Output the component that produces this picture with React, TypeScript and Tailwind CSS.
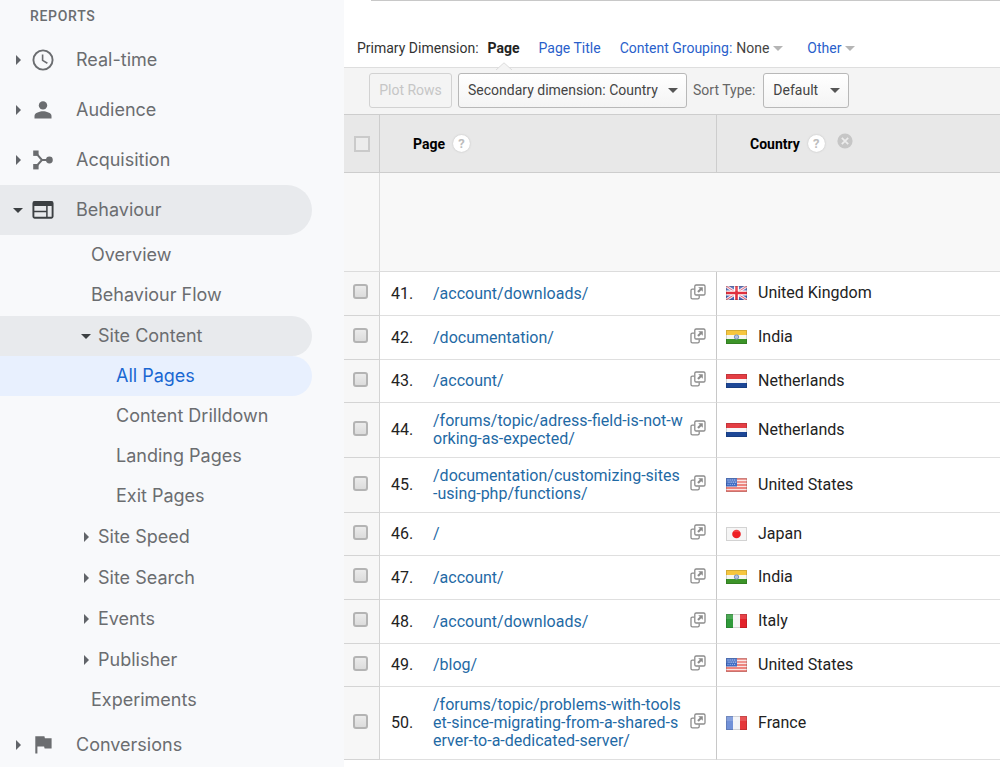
import type { ReactNode } from "react";

type FlagCode = "gb" | "in" | "nl" | "us" | "jp" | "it" | "fr";

interface Row {
  n: number;
  path: string;
  flag: FlagCode;
  country: string;
}

const rows: Row[] = [
  { n: 41, path: "/account/downloads/", flag: "gb", country: "United Kingdom" },
  { n: 42, path: "/documentation/", flag: "in", country: "India" },
  { n: 43, path: "/account/", flag: "nl", country: "Netherlands" },
  { n: 44, path: "/forums/topic/adress-field-is-not-working-as-expected/", flag: "nl", country: "Netherlands" },
  { n: 45, path: "/documentation/customizing-sites-using-php/functions/", flag: "us", country: "United States" },
  { n: 46, path: "/", flag: "jp", country: "Japan" },
  { n: 47, path: "/account/", flag: "in", country: "India" },
  { n: 48, path: "/account/downloads/", flag: "it", country: "Italy" },
  { n: 49, path: "/blog/", flag: "us", country: "United States" },
  {
    n: 50,
    path: "/forums/topic/problems-with-toolset-since-migrating-from-a-shared-server-to-a-dedicated-server/",
    flag: "fr",
    country: "France",
  },
];

function FlagArt({ code }: { code: FlagCode }) {
  switch (code) {
    case "gb":
      return (
        <>
          <rect width="21" height="14" fill="#4a64b4" />
          <path d="M0 0L21 14M21 0L0 14" stroke="#f3e9f0" strokeWidth="3" />
          <path d="M0 0L21 14M21 0L0 14" stroke="#e0526a" strokeWidth="1" />
          <path d="M10.5 0V14M0 7H21" stroke="#fff" strokeWidth="5" />
          <path d="M10.5 0V14M0 7H21" stroke="#e0303f" strokeWidth="2.6" />
        </>
      );
    case "in":
      return (
        <>
          <rect width="21" height="5" fill="#f5bd1f" />
          <rect y="5" width="21" height="4" fill="#f6f6f0" />
          <rect y="9" width="21" height="5" fill="#3c9428" />
          <circle cx="10.5" cy="7" r="2.2" fill="#b4c3dc" stroke="#6d8bbd" strokeWidth="0.9" />
        </>
      );
    case "nl":
      return (
        <>
          <rect width="21" height="5" fill="#e01f26" />
          <rect y="5" width="21" height="4" fill="#f7f7f9" />
          <rect y="9" width="21" height="5" fill="#1d4796" />
        </>
      );
    case "us":
      return (
        <>
          <rect width="21" height="14" fill="#f9e4e2" />
          <path d="M0 1H21M0 4H21M0 7H21M0 10H21M0 13H21" stroke="#e8655f" strokeWidth="1.4" />
          <rect width="11" height="8.5" fill="#3f6bc4" />
          <path d="M1.5 2H10M2.5 4.2H10M1.5 6.4H10" stroke="#b9cdf0" strokeWidth="0.9" strokeDasharray="1 1.2" />
        </>
      );
    case "jp":
      return (
        <>
          <rect width="21" height="14" fill="#f5f5f5" />
          <circle cx="10.5" cy="7" r="4.3" fill="#ee1f24" />
        </>
      );
    case "it":
      return (
        <>
          <rect width="7" height="14" fill="#2f9a3a" />
          <rect x="7" width="7" height="14" fill="#f5f5f5" />
          <rect x="14" width="7" height="14" fill="#e3222a" />
        </>
      );
    case "fr":
      return (
        <>
          <rect width="7" height="14" fill="#7191d8" />
          <rect x="7" width="7" height="14" fill="#f3f4f7" />
          <rect x="14" width="7" height="14" fill="#e5383a" />
        </>
      );
  }
}

function Flag({ code }: { code: FlagCode }) {
  return (
    <svg width="21" height="14" viewBox="0 0 21 14" className="shrink-0" aria-hidden="true">
      <FlagArt code={code} />
      <rect width="21" height="5" fill="#fff" opacity="0.14" />
      <rect x="0.5" y="0.5" width="20" height="13" fill="none" stroke="#000" strokeOpacity="0.14" />
    </svg>
  );
}

function CaretRight() {
  return (
    <svg width="5" height="10" viewBox="0 0 5 10" fill="#616469" className="shrink-0" aria-hidden="true">
      <path d="M0 0L5 5L0 10Z" />
    </svg>
  );
}

function CaretDown({ className }: { className: string }) {
  return (
    <svg width="10" height="5" viewBox="0 0 10 5" fill="currentColor" className={className} aria-hidden="true">
      <path d="M0 0H10L5 5Z" />
    </svg>
  );
}

const clockIcon = (
  <svg width="22" height="22" viewBox="0 0 22 22" fill="none" stroke="#6b6d70" strokeWidth="1.9" aria-hidden="true">
    <circle cx="11" cy="11" r="9.6" />
    <path d="M10.6 5.5V11.4L15.4 14.2" strokeWidth="1.6" />
  </svg>
);
const personIcon = (
  <svg width="22" height="22" viewBox="0 0 22 22" fill="#6b6d70" aria-hidden="true">
    <circle cx="11" cy="6.4" r="4.2" />
    <path d="M2.5 19.5V17C2.5 13.8 8 12.3 11 12.3S19.5 13.8 19.5 17V19.5Z" />
  </svg>
);
const acquisitionIcon = (
  <svg width="22" height="22" viewBox="0 0 22 22" fill="#6b6d70" aria-hidden="true">
    <rect x="1.2" y="1.5" width="5.4" height="5.4" />
    <rect x="1.2" y="15" width="5.4" height="5.4" />
    <circle cx="17.4" cy="11" r="3.4" />
    <path d="M4 4.2L10 11L4 17.7M10 11H17" fill="none" stroke="#6b6d70" strokeWidth="2" />
  </svg>
);
const behaviourIcon = (
  <svg width="22" height="22" viewBox="0 0 22 22" fill="none" stroke="#3c4043" aria-hidden="true">
    <rect x="1.4" y="3" width="19.2" height="15.8" rx="1.2" strokeWidth="1.9" />
    <path d="M1 4.9H21" strokeWidth="4.2" />
    <path d="M2 12.6H14.6M14.9 7V18.5" strokeWidth="1.5" />
  </svg>
);
const flagIcon = (
  <svg width="22" height="22" viewBox="0 0 22 22" fill="#6b6d70" aria-hidden="true">
    <path d="M3.3 2.3H12.4L12.9 4.3H19.6V14.4H12.6L12.1 12.4H5.4V19.6H3.3Z" />
  </svg>
);

function TopItem({ icon, label, open }: { icon: ReactNode; label: string; open?: boolean }) {
  return (
    <a
      href="#"
      className={
        open
          ? "mr-8 flex h-[50px] items-center rounded-r-full bg-[#e8eaed]"
          : "mr-8 flex h-[50px] items-center rounded-r-full"
      }
    >
      <span className="flex w-8 shrink-0 items-center justify-center pl-1">
        {open ? <CaretDown className="text-[#3c4043]" /> : <CaretRight />}
      </span>
      <span className="w-11 shrink-0">{icon}</span>
      {label}
    </a>
  );
}

function GroupItem({ label, open }: { label: string; open?: boolean }) {
  return (
    <a
      href="#"
      className={
        open
          ? "mr-8 flex h-10 items-center rounded-r-full bg-[#e8eaed] pl-20"
          : "mr-8 flex h-10 items-center rounded-r-full pl-20"
      }
    >
      <span className="flex w-[18px] shrink-0 items-center pl-px">
        {open ? <CaretDown className="text-[#3c4043]" /> : <span className="pl-[3px]"><CaretRight /></span>}
      </span>
      {label}
    </a>
  );
}

function Leaf({ label, deep, active }: { label: string; deep?: boolean; active?: boolean }) {
  const base = "mr-8 flex h-10 items-center rounded-r-full";
  const pad = deep ? "pl-[116px]" : "pl-[91px]";
  const tone = active ? "bg-[#e8f0fe] text-[#1967d2]" : "";
  return (
    <a href="#" aria-current={active ? "page" : undefined} className={`${base} ${pad} ${tone}`}>
      {label}
    </a>
  );
}

function Sidebar() {
  return (
    <nav
      aria-label="Reports"
      className="w-[344px] shrink-0 bg-[#f8f9fb] font-['Inter',sans-serif] text-[18px] leading-6 text-[#6b6d70]"
    >
      <h2 className="flex h-[35px] items-start pt-[7px] pl-[30px] font-['Roboto',sans-serif] text-sm leading-[18px] font-medium tracking-wider">
        REPORTS
      </h2>
      <ul>
        <li><TopItem icon={clockIcon} label="Real-time" /></li>
        <li><TopItem icon={personIcon} label="Audience" /></li>
        <li><TopItem icon={acquisitionIcon} label="Acquisition" /></li>
        <li>
          <TopItem icon={behaviourIcon} label="Behaviour" open />
          <ul>
            <li><Leaf label="Overview" /></li>
            <li><Leaf label="Behaviour Flow" /></li>
            <li className="mt-px">
              <GroupItem label="Site Content" open />
              <ul>
                <li><Leaf label="All Pages" deep active /></li>
                <li><Leaf label="Content Drilldown" deep /></li>
                <li><Leaf label="Landing Pages" deep /></li>
                <li><Leaf label="Exit Pages" deep /></li>
              </ul>
            </li>
            <li className="mt-px"><GroupItem label="Site Speed" /></li>
            <li className="mt-px"><GroupItem label="Site Search" /></li>
            <li className="mt-px"><GroupItem label="Events" /></li>
            <li className="mt-px"><GroupItem label="Publisher" /></li>
            <li><Leaf label="Experiments" /></li>
          </ul>
        </li>
        <li><TopItem icon={flagIcon} label="Conversions" /></li>
      </ul>
    </nav>
  );
}

function DimensionBar() {
  return (
    <div className="flex h-[67px] flex-col">
      <div className="ml-[27px] h-px bg-[#c8c8c8]" />
      <div className="flex flex-1 items-end pb-2.5 pl-[13px] text-sm leading-[18px] whitespace-nowrap text-[#333]">
        <span>Primary Dimension:</span>
        <span className="relative ml-[9px] font-bold text-[#222]">
          Page
          <svg
            width="16"
            height="8"
            viewBox="0 0 16 8"
            className="absolute top-[23px] left-1/2 -translate-x-1/2"
            aria-hidden="true"
          >
            <path d="M0 8L8 0.8L16 8" fill="#f4f4f4" stroke="#dcdcdc" />
          </svg>
        </span>
        <a href="#" className="ml-[19px] text-[#2a5fcb]">Page Title</a>
        <label htmlFor="grouping" className="ml-[19px] text-[#2a5fcb]">Content Grouping:</label>
        <span className="relative ml-1 flex items-center">
          <select id="grouping" className="w-[47px] appearance-none bg-transparent text-[#444]">
            <option>None</option>
          </select>
          <CaretDown className="pointer-events-none absolute right-0 text-[#b5b5b5]" />
        </span>
        <button type="button" className="ml-6 flex items-center gap-1 text-[#2a5fcb]">
          Other
          <CaretDown className="text-[#b5b5b5]" />
        </button>
      </div>
    </div>
  );
}

function Toolbar() {
  return (
    <div className="flex h-[47px] items-center border-t border-[#dedede] bg-[#f4f4f4] pb-0.5 pl-[25px] text-sm whitespace-nowrap text-[#444]">
      <button
        type="button"
        disabled
        className="h-[35px] w-[83px] rounded-[3px] border border-[#d2d2d2] bg-[#f4f4f4] text-[#c6c6c6]"
      >
        Plot Rows
      </button>
      <span className="relative ml-1.5 flex items-center">
        <select
          aria-label="Secondary dimension"
          className="h-[35px] w-[229px] appearance-none rounded-[3px] border border-[#b8b8b8] bg-linear-to-b from-white to-[#f4f4f4] pl-[9px]"
        >
          <option>Secondary dimension: Country</option>
        </select>
        <CaretDown className="pointer-events-none absolute right-[9px] text-[#555]" />
      </span>
      <label htmlFor="sort" className="ml-1.5 text-[#666]">Sort Type:</label>
      <span className="relative ml-2 flex items-center">
        <select
          id="sort"
          className="h-[35px] w-[86px] appearance-none rounded-[3px] border border-[#b8b8b8] bg-linear-to-b from-white to-[#f4f4f4] pl-[9px]"
        >
          <option>Default</option>
        </select>
        <CaretDown className="pointer-events-none absolute right-[9px] text-[#555]" />
      </span>
    </div>
  );
}

function Help({ topic }: { topic: string }) {
  return (
    <button
      type="button"
      aria-label={`Help: ${topic}`}
      className="flex size-[17px] items-center justify-center rounded-full bg-white text-[13px] leading-none font-bold text-[#bdbdbd] shadow-[0_0_2px_#bbb]"
    >
      ?
    </button>
  );
}

function OpenIcon() {
  return (
    <svg width="16" height="16" viewBox="0 0 16 16" fill="none" stroke="#8c8c8c" strokeWidth="1.3" aria-hidden="true">
      <path d="M4.5 5.2H2.4Q1 5.2 1 6.6V13.4Q1 14.8 2.4 14.8H7.8Q9.2 14.8 9.2 13.4V11.4" />
      <rect x="4.8" y="1" width="10.2" height="10" rx="1.3" fill="#fff" />
      <path d="M8.2 3.2H12.8V7.8L11.2 6.2L8.8 8.8L7.2 7.2L9.8 4.8Z" fill="#8c8c8c" stroke="none" />
    </svg>
  );
}

function PagesTable() {
  return (
    <table className="w-full table-fixed border-separate border-spacing-0 text-left">
      <colgroup>
        <col className="w-9" />
        <col className="w-[53px]" />
        <col className="w-[257px]" />
        <col className="w-[27px]" />
        <col />
      </colgroup>
      <thead className="bg-[#e8e8e8] text-sm text-black">
        <tr className="h-[59px]">
          <th className="border-y border-r border-[#cdcdcd] pl-2.5">
            <input
              type="checkbox"
              aria-label="Select all rows"
              className="block size-4 appearance-none border-2 border-[#cacaca] bg-[#ececec]"
            />
          </th>
          <th colSpan={3} className="border-y border-r border-[#cdcdcd] pl-[33px]">
            <span className="flex items-center gap-2">
              Page
              <Help topic="Page" />
            </span>
          </th>
          <th className="border-y border-[#cdcdcd] pl-[33px]">
            <span className="flex items-center gap-2">
              Country
              <Help topic="Country" />
              <button type="button" aria-label="Remove Country" className="ml-1 pb-1.5">
                <svg width="16" height="16" viewBox="0 0 16 16" aria-hidden="true">
                  <circle cx="8" cy="8" r="7.6" fill="#c6c6c6" />
                  <path d="M4.8 4.8L11.2 11.2M11.2 4.8L4.8 11.2" stroke="#ececec" strokeWidth="1.7" />
                </svg>
              </button>
            </span>
          </th>
        </tr>
      </thead>
      <tbody className="bg-[#f8f8f8]">
        <tr className="h-[99px]">
          <td className="border-r border-b border-[#dcdcdc]" />
          <td colSpan={3} className="border-b border-[#dcdcdc]" />
          <td className="border-b border-[#dcdcdc]" />
        </tr>
      </tbody>
      <tbody className="text-base leading-[18px] text-[#222]">
        {rows.map((r) => (
          <tr key={r.n} className="h-11 nth-[3n]:h-[43px]">
            <td className="border-r border-b border-[#d4d4d4] bg-[#f7f7f7] pb-1 pl-[9px]">
              <input
                type="checkbox"
                aria-label={`Select row ${r.n}`}
                className="block size-[15px] appearance-none rounded-[3px] border-2 border-[#b4b4b4] bg-linear-to-b from-[#ebebeb] to-[#dcdcdc]"
              />
            </td>
            <td className="border-b border-[#dfdfdf] pl-[11px]">{r.n}.</td>
            <td className="border-b border-[#dfdfdf] py-[9px] pr-[7px] break-all">
              <a href="#" className="text-[#1f6aa5]">{r.path}</a>
            </td>
            <td className="border-r border-b border-[#dfdfdf] border-r-[#c8c8c8] pb-1">
              <a href="#" aria-label={`Open ${r.path}`} className="block">
                <OpenIcon />
              </a>
            </td>
            <td className="border-b border-[#dfdfdf] pb-px pl-[9px]">
              <span className="flex items-center gap-[11px]">
                <Flag code={r.flag} />
                {r.country}
              </span>
            </td>
          </tr>
        ))}
      </tbody>
    </table>
  );
}

export default function App() {
  return (
    <div className="flex min-h-screen bg-white">
      <Sidebar />
      <main className="min-w-0 flex-1 font-['Roboto',sans-serif]">
        <DimensionBar />
        <Toolbar />
        <PagesTable />
      </main>
    </div>
  );
}
